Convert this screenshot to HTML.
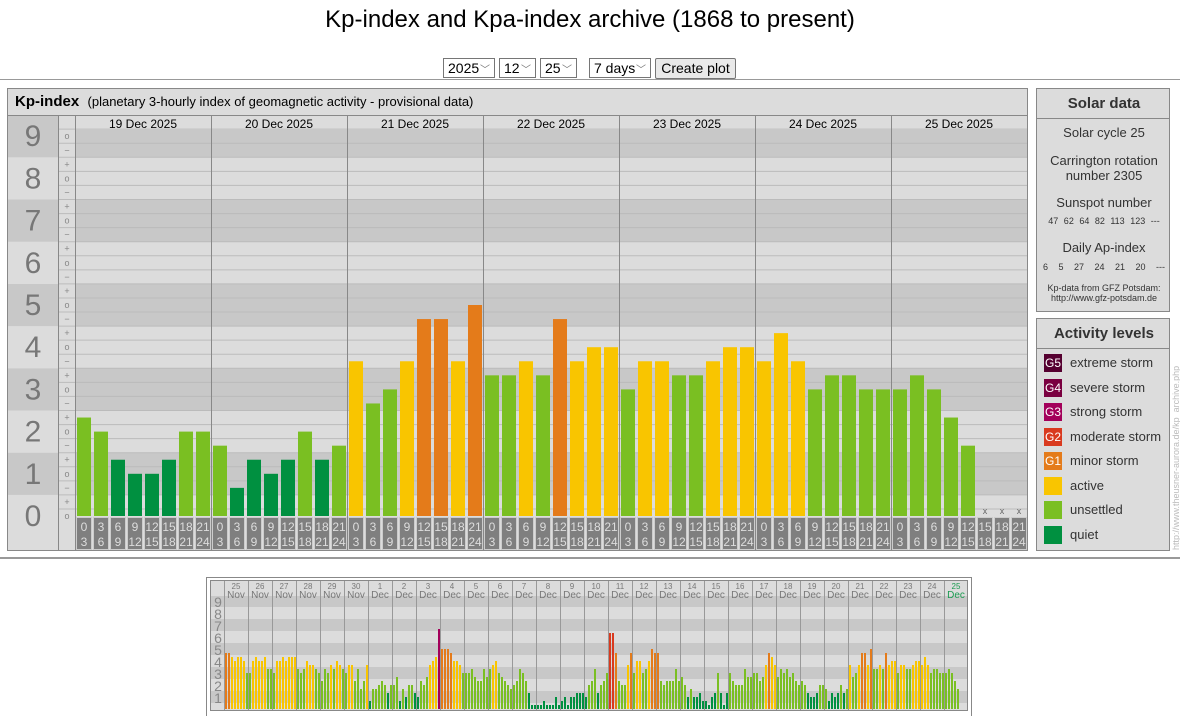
<!DOCTYPE html>
<html><head><meta charset="utf-8">
<style>
body{margin:0;width:1180px;height:716px;background:#fff;font-family:"Liberation Sans",Arial,sans-serif;position:relative;overflow:hidden;color:#000}
.a{position:absolute}
h1{position:absolute;top:6px;left:0;width:1180px;text-align:center;font-weight:normal;font-size:24px;margin:0}
.sel{position:absolute;top:58px;border:1px solid #767676;background:#fff;font-size:14px;line-height:18px;padding-left:4px;box-sizing:border-box;height:20px}
.sel i{position:absolute;right:4px;top:3px;font-style:normal;color:#777;font-size:10px}
.btn{position:absolute;top:58px;left:655px;width:81px;height:21px;border:1px solid #767676;background:#e9e9e9;font-size:14px;text-align:center;line-height:19px;box-sizing:border-box;border-radius:2px}
.panel{position:absolute;background:#dcdcdc;border:1px solid #888;box-sizing:border-box}
.rt{position:absolute;left:0;width:134px;text-align:center;color:#333}
</style></head><body>
<h1>Kp-index and Kpa-index archive (1868 to present)</h1>
<div class="sel" style="left:443px;width:52px">2025<i>﹀</i></div>
<div class="sel" style="left:499px;width:37px">12<i>﹀</i></div>
<div class="sel" style="left:540px;width:37px">25<i>﹀</i></div>
<div class="sel" style="left:589px;width:62px">7 days<i>﹀</i></div>
<div class="btn">Create plot</div>
<div class="a" style="left:0;top:79px;width:1180px;height:1px;background:#999"></div>
<div class="a" style="left:0;top:557px;width:1180px;height:2px;background:#999"></div>

<div class="panel" style="left:7px;top:88px;width:1021px;height:463px"></div>
<div class="a" style="left:8px;top:115px;width:1019px;height:1px;background:#888"></div>
<div class="a" style="left:15px;top:93px;font-size:15px"><b>Kp-index</b>&nbsp; <span style="font-size:13px">(planetary 3-hourly index of geomagnetic activity - provisional data)</span></div>
<svg class="a" id="main" style="left:0;top:0" width="1030" height="552"></svg>

<div class="panel" style="left:1036px;top:88px;width:134px;height:224px">
<div class="rt" style="top:6px;font-size:15px;font-weight:bold;color:#333">Solar data</div>
<div class="a" style="left:0;top:29px;width:132px;height:1px;background:#888"></div>
<div class="rt" style="top:36px;font-size:13px">Solar cycle 25</div>
<div class="rt" style="top:64px;font-size:13px;line-height:15px">Carrington rotation<br>number 2305</div>
<div class="rt" style="top:106px;font-size:13px">Sunspot number</div>
<div class="rt" style="top:127px;font-size:9px;word-spacing:3px">47 62 64 82 113 123 ---</div>
<div class="rt" style="top:151px;font-size:13px">Daily Ap-index</div>
<div class="rt" style="top:173px;font-size:9px;word-spacing:8px">6 5 27 24 21 20 ---</div>
<div class="rt" style="top:194px;font-size:9px;line-height:10px">Kp-data from GFZ Potsdam:<br>http://www.gfz-potsdam.de</div>
</div>
<div class="panel" style="left:1036px;top:318px;width:134px;height:233px">
<div class="rt" style="top:6px;font-size:15px;font-weight:bold;color:#333">Activity levels</div>
<div class="a" style="left:0;top:29px;width:132px;height:1px;background:#888"></div>
<div id="leg"></div>
</div>
<div class="a" style="left:1171px;top:550px;width:220px;transform-origin:0 0;transform:rotate(-90deg);font-size:9px;color:#bbb;white-space:nowrap;line-height:10px">http://www.theusner-aurora.de/kp_archive.php</div>

<div class="a" style="left:206px;top:577px;width:766px;height:139px;border:1px solid #888;border-bottom:none;box-sizing:border-box"></div>
<svg class="a" id="bot" style="left:0;top:0" width="1180" height="716"></svg>

<script>
function col(v){if(v<5)return"#009040";if(v<11)return"#7abf22";if(v<14)return"#f9c500";if(v<17)return"#e47b1a";if(v<20)return"#d93a1f";if(v<23)return"#a3005a";if(v<26)return"#7a0040";return"#550030"}
var NS="http://www.w3.org/2000/svg";
function el(s,t,a,txt){var e=document.createElementNS(NS,t);for(var k in a)e.setAttribute(k,a[k]);if(txt!=null)e.textContent=txt;s.appendChild(e);return e}
var m=document.getElementById("main");
var B=516,S=42.2,X0=75,DW=136;
var md=[[7,6,4,3,3,4,6,6],[5,2,4,3,4,6,4,5],[11,8,9,11,14,14,11,15],[10,10,11,10,14,11,12,12],[9,11,11,10,10,11,12,12],[11,13,11,9,10,10,9,9],[9,10,9,7,5,-1,-1,-1]];
var dates=["19 Dec 2025","20 Dec 2025","21 Dec 2025","22 Dec 2025","23 Dec 2025","24 Dec 2025","25 Dec 2025"];
for(var n=0;n<=9;n++){var y1=B-(n+0.5)*S,y2=B-(n-0.5)*S;var c=(n%2)?"#c8c8c8":"#dcdcdc";
 var t=Math.max(y1,116),b=Math.min(y2,550);
 el(m,"rect",{x:8,y:t,width:50,height:b-t,fill:c});
 el(m,"text",{x:33,y:B-n*S+10,"font-size":30,fill:"#777","text-anchor":"middle","font-family":"Liberation Sans"},n);
 var pt=Math.max(y1,130),pb=Math.min(y2,B);
 if(pb>pt)el(m,"rect",{x:75,y:pt,width:952,height:pb-pt,fill:c});
}
el(m,"rect",{x:58,y:116,width:17,height:434,fill:"#dcdcdc"});
el(m,"rect",{x:75,y:116,width:952,height:14,fill:"#dcdcdc"});
var marks=["o","+","−"];
for(var k=0;k<=28;k++){var y=B-(k+0.5)*S/3;if(y>129){el(m,"line",{x1:58,x2:1027,y1:y,y2:y,stroke:"#bbb","stroke-width":1});}
 var yc=B-k*S/3;if(k<=27)el(m,"text",{x:67,y:yc+3,"font-size":9,fill:"#888","text-anchor":"middle"},marks[k%3]);}
el(m,"line",{x1:58.5,x2:58.5,y1:116,y2:550,stroke:"#888"});
el(m,"line",{x1:75.5,x2:75.5,y1:116,y2:550,stroke:"#888"});
var hrs=[["0","3"],["3","6"],["6","9"],["9","12"],["12","15"],["15","18"],["18","21"],["21","24"]];
for(var d=0;d<7;d++){var dx=X0+d*DW;
 if(d>0)el(m,"line",{x1:dx+.5,x2:dx+.5,y1:116,y2:550,stroke:"#888"});
 el(m,"text",{x:dx+68,y:128,"font-size":12,"text-anchor":"middle"},dates[d]);
 for(var i=0;i<8;i++){var sx=dx+i*17,v=md[d][i];
  if(v>=0){var h=v*S/3;el(m,"rect",{x:sx+2,y:B-h,width:14,height:h,fill:col(v)});}
  else el(m,"text",{x:sx+9,y:514,"font-size":9,fill:"#666","text-anchor":"middle"},"x");
  el(m,"rect",{x:sx+1.5,y:517.5,width:15,height:32,fill:"#7f7f7f",stroke:"#ccc"});
  el(m,"text",{x:sx+9,y:531,"font-size":12,fill:"#ddd","text-anchor":"middle"},hrs[i][0]);
  el(m,"text",{x:sx+9,y:546,"font-size":12,fill:"#ddd","text-anchor":"middle"},hrs[i][1]);
 }}
var lg=[["G5","extreme storm","#550030"],["G4","severe storm","#7a0040"],["G3","strong storm","#a3005a"],["G2","moderate storm","#d93a1f"],["G1","minor storm","#e47b1a"],["","active","#f9c500"],["","unsettled","#7abf22"],["","quiet","#009040"]];
var L=document.getElementById("leg"),h="";
lg.forEach(function(g,i){var y=35+i*24.5;h+='<div class="a" style="left:7px;top:'+y+'px;width:18px;height:18px;background:'+g[2]+';color:#fff;font-size:12px;text-align:center;line-height:18px">'+g[0]+'</div><div class="a" style="left:33px;top:'+(y+1)+'px;font-size:13px;color:#333">'+g[1]+'</div>';});
L.innerHTML=h;
var b=document.getElementById("bot");var BB=709,SS=12,BX=224,BW=24;
var bd=[[14,14,13,12,13,13,12,9],[9,12,13,12,12,13,10,10],[9,12,12,13,12,13,13,13],[10,9,10,12,11,11,10,9],[7,10,9,11,10,12,11,10],[9,11,11,7,10,5,7,11],[2,5,5,6,7,6,4,6],[6,8,2,5,3,6,6,4],[3,7,6,8,11,12,13,20],[15,15,15,14,12,12,11,9],[9,9,10,8,7,7,10,8],[10,11,12,9,8,7,6,5],[6,7,10,9,7,4,1,1],[1,1,2,1,1,1,3,1],[2,3,1,3,3,4,4,4],[3,6,7,10,4,6,7,9],[19,19,14,7,6,6,11,14],[9,12,12,9,10,12,15,14],[14,7,6,7,7,7,10,7],[8,6,3,5,3,3,4,2],[2,1,3,4,9,4,1,4],[9,7,6,6,6,10,8,8],[9,9,7,8,11,14,13,11],[8,10,9,10,8,9,7,6],[7,6,4,3,3,4,6,6],[5,2,4,3,4,6,4,5],[11,8,9,11,14,14,11,15],[10,10,11,10,14,11,12,12],[9,11,11,10,10,11,12,12],[11,13,11,9,10,10,9,9],[9,10,9,7,5,-1,-1,-1]];
el(b,"rect",{x:210,y:580,width:758,height:130,fill:"#dcdcdc"});
for(var n=1;n<=9;n++){var y1=BB-(n+0.5)*SS;if(n%2)el(b,"rect",{x:210,y:Math.max(y1,596),width:758,height:SS-(y1<596?596-y1:0),fill:"#c8c8c8"});
 el(b,"text",{x:218,y:BB-n*SS+6,"font-size":14,fill:"#888","text-anchor":"middle"},n);}
el(b,"rect",{x:210,y:580,width:758,height:16,fill:"#dcdcdc"});
el(b,"rect",{x:210.5,y:580.5,width:757,height:130,fill:"none",stroke:"#888"});
var lab=[];for(var i=25;i<=30;i++)lab.push([i,"Nov"]);for(var i=1;i<=25;i++)lab.push([i,"Dec"]);
for(var d=0;d<31;d++){var dx=BX+d*BW;
 el(b,"line",{x1:dx+.5,x2:dx+.5,y1:581,y2:710,stroke:"#999"});
 var c=d==30?"#1a9a50":"#777";
 el(b,"text",{x:dx+12,y:589,"font-size":8,fill:c,"text-anchor":"middle"},lab[d][0]);
 el(b,"text",{x:dx+12,y:598,"font-size":10,fill:c,"text-anchor":"middle"},lab[d][1]);
 for(var i=0;i<8;i++){var v=bd[d][i];if(v<0)continue;var hh=v*SS/3;el(b,"rect",{x:dx+1+i*3,y:BB-hh,width:2,height:hh,fill:col(v)});}
}
</script>
</body></html>
